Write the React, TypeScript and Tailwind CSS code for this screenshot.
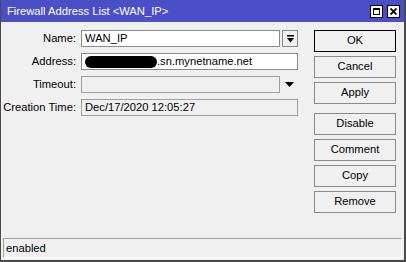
const font = "font-['Liberation_Sans',Arial,sans-serif]";

function Field({ label, children }: { label: string; children: React.ReactNode }) {
  return (
    <div className="flex h-[17px] items-center">
      <span className="flex w-[76px] shrink-0 justify-end whitespace-nowrap pr-[1px]">{label}</span>
      <div className="ml-[4px] flex items-center">{children}</div>
    </div>
  );
}

function Btn({ label, primary = false }: { label: string; primary?: boolean }) {
  return (
    <button
      className={`flex h-[22px] w-[82px] items-center justify-center border bg-[#f0f0f0] text-[11.2px] leading-none text-black ${
        primary ? "border-black" : "border-[#8a8a8a]"
      }`}
    >
      {label}
    </button>
  );
}

export default function App() {
  return (
    <div
      className={`flex h-[262px] w-[406px] flex-col border-l border-r-2 border-b-2 border-[#4a4a4a] bg-[#f0f0f0] text-[11.2px] text-black ${font}`}
    >
      {/* title bar */}
      <div className="flex h-[22px] shrink-0 items-center bg-[#4b4fc7] pl-[6px] pr-[4px] text-white">
        <span className="flex-1">Firewall Address List &lt;WAN_IP&gt;</span>
        <div className="flex gap-[4px]">
          <div className="flex h-[13px] w-[13px] items-center justify-center border border-black bg-white">
            <div className="h-[7px] w-[7px] border border-black border-t-2" />
          </div>
          <div className="flex h-[13px] w-[13px] items-center justify-center border border-black bg-white">
            <svg width="7" height="7" viewBox="0 0 7 7">
              <path d="M0.5 0.5 L6.5 6.5 M6.5 0.5 L0.5 6.5" stroke="black" strokeWidth="1.8" />
            </svg>
          </div>
        </div>
      </div>

      {/* body */}
      <div className="flex flex-1">
        <div className="flex w-[313px] flex-col gap-[6px] pt-[8px]">
          <Field label="Name:">
            <div className="flex h-[17px] w-[199px] items-center border border-[#8a8a8a] bg-white px-[3px]">WAN_IP</div>
            <div className="ml-[2px] flex h-[17px] w-[16px] items-center justify-center border border-[#8a8a8a] bg-[#f0f0f0]">
              <svg width="7" height="8" viewBox="0 0 7 8">
                <rect x="0" y="0" width="7" height="1.5" fill="black" />
                <path d="M0 3 L7 3 L3.5 7.5 Z" fill="black" />
              </svg>
            </div>
          </Field>
          <Field label="Address:">
            <div className="flex h-[17px] w-[217px] items-center border border-[#8a8a8a] bg-white px-[3px]">
              <span className="inline-block h-[12px] w-[72px] rounded-full bg-black" />
              <span>.sn.mynetname.net</span>
            </div>
          </Field>
          <Field label="Timeout:">
            <div className="h-[17px] w-[199px] border border-[#a0a0a0] bg-[#f0f0f0]" />
            <div className="flex h-[17px] w-[18px] items-center justify-center">
              <svg width="9" height="5" viewBox="0 0 9 5">
                <path d="M0 0 L9 0 L4.5 5 Z" fill="black" />
              </svg>
            </div>
          </Field>
          <Field label="Creation Time:">
            <div className="flex h-[17px] w-[217px] items-center border border-[#a0a0a0] bg-[#f0f0f0] px-[3px]">
              Dec/17/2020 12:05:27
            </div>
          </Field>
        </div>

        <div className="flex flex-col pt-[8px]">
          <div className="flex flex-col gap-[4px]">
            <Btn label="OK" primary />
            <Btn label="Cancel" />
            <Btn label="Apply" />
          </div>
          <div className="mt-[9px] flex flex-col gap-[4px]">
            <Btn label="Disable" />
            <Btn label="Comment" />
            <Btn label="Copy" />
            <Btn label="Remove" />
          </div>
        </div>
      </div>

      {/* status bar */}
      <div className="mx-[2px] mb-[2px] flex h-[20px] shrink-0 items-center border-t border-l border-t-[#a0a0a0] border-l-[#a0a0a0] border-r border-b border-r-white border-b-white px-[2px]">
        enabled
      </div>
    </div>
  );
}
